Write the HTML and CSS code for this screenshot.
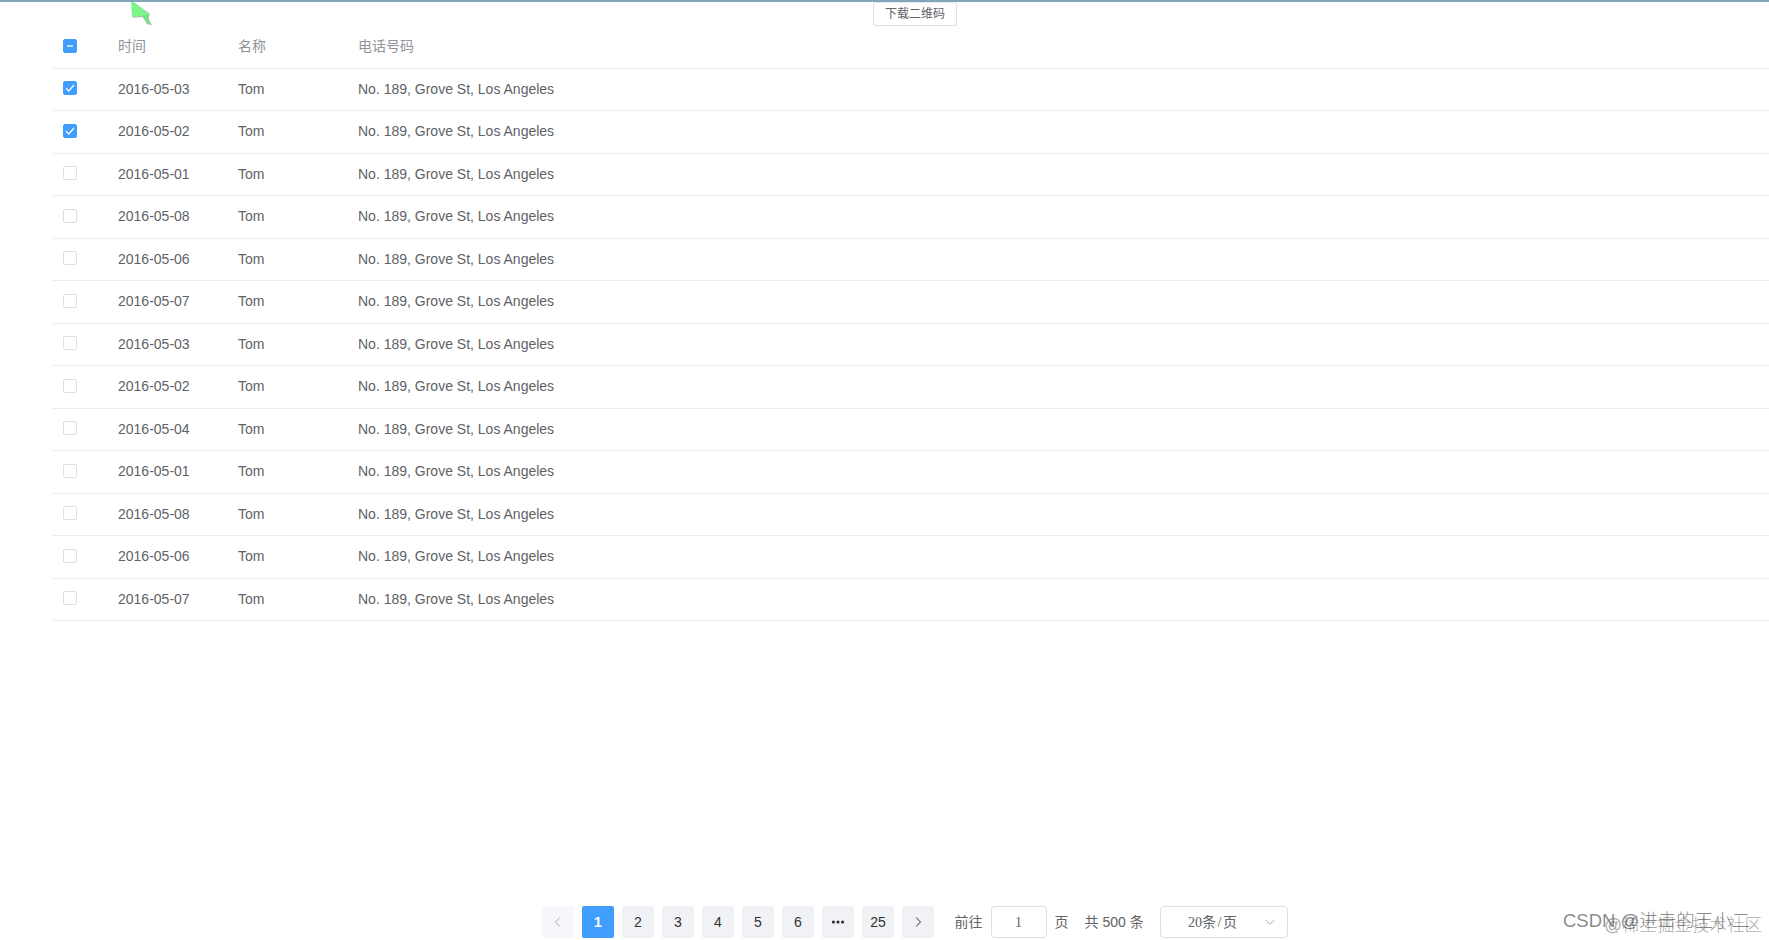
FILE: index.html
```html
<!DOCTYPE html>
<html lang="zh">
<head>
<meta charset="utf-8">
<title>二维码列表</title>
<link rel="stylesheet" href="styles.css">
</head>
<body>
<main class="page">
  <div class="toolbar"><button class="download">下载二维码</button></div>
  <section class="table" id="table">
    <div class="row head"><span class="box mixed"></span><span>时间</span><span>名称</span><span>电话号码</span></div>
  </section>
  <nav class="pagination">
    <div class="pager">
      <button class="page-btn disabled"><svg viewBox="0 0 12 12"><path d="M7.8 1.5 3.5 6l4.3 4.5"/></svg></button>
      <button class="page-btn active">1</button>
      <button class="page-btn">2</button>
      <button class="page-btn">3</button>
      <button class="page-btn">4</button>
      <button class="page-btn">5</button>
      <button class="page-btn">6</button>
      <button class="page-btn"><svg class="dots" viewBox="0 0 14 14"><circle cx="2.4" cy="7" r="1.6"/><circle cx="7" cy="7" r="1.6"/><circle cx="11.6" cy="7" r="1.6"/></svg></button>
      <button class="page-btn">25</button>
      <button class="page-btn"><svg viewBox="0 0 12 12"><path d="M4.2 1.5 8.5 6l-4.3 4.5"/></svg></button>
    </div>
    <span class="goto">前往</span>
    <span class="jump">1</span>
    <span class="unit">页</span>
    <span class="total">共 500 条</span>
    <div class="select"><span>20条<span class="slash">/</span>页</span><svg viewBox="0 0 12 12"><path d="M1.5 3.8 6 8.3l4.5-4.5"/></svg></div>
  </nav>
  <svg class="cursor" viewBox="0 0 26 28"><path class="shade" d="M2 1 19.8 13.8 18.6 18.5 22 25.6 17 24 12.5 17 3 17.8Z"/><path class="face" d="M1 0 19 14 12.5 16 2 17Z"/><path class="tail" d="M12.5 16 19 14 17.6 18.8 20.8 24.6 17 23Z"/></svg>
  <span class="mark mark-back">@稀土掘金技术社区</span>
  <span class="mark mark-front">CSDN @进击的王小二</span>
</main>
<script src="table.js"></script>
</body>
</html>
```
FILE: table.js
```js
const days = ['03', '02', '01', '08', '06', '07', '03', '02', '04', '01', '08', '06', '07'];
const tick = '<svg viewBox="0 0 14 14"><path d="M3 7.2 5.7 10 11 4"/></svg>';

document.getElementById('table').insertAdjacentHTML('beforeend', days.map((day, i) => `
  <div class="row">
    <span class="box${i < 2 ? ' checked' : ''}">${i < 2 ? tick : ''}</span>
    <span>2016-05-${day}</span><span>Tom</span><span>No. 189, Grove St, Los Angeles</span>
  </div>`).join(''));
```
FILE: styles.css
```css
* { box-sizing: border-box; }
body { margin: 0; background: #fff; color: #606266; font: 14px/23px "Liberation Sans", "Noto Sans CJK SC", sans-serif; }
button { padding: 0; font: inherit; }

.page { position: relative; display: flex; flex-direction: column; height: 940px; overflow: hidden; border-top: 2px solid #7fa6bd; }

.toolbar { display: flex; justify-content: center; height: 24px; padding-left: 61px; }
.download { width: 84px; height: 24px; border: 1px solid #dcdfe6; border-top-color: #e6e8ee; border-radius: 3px; background: #fff; color: #606266; font-size: 12px; line-height: 20px; }

.table { margin-left: 52px; }
.row { display: grid; grid-template-columns: 55px 120px 120px 1fr; align-items: center; height: 42.5px; padding-left: 11px; border-bottom: 1px solid #ebedf0; }
.row span { white-space: nowrap; }
.head { color: #909399; }
.row .box { display: block; width: 14px; height: 14px; margin-bottom: 2px; border: 1px solid #dcdfe6; border-radius: 2px; background: #fff; }
.box svg { display: block; width: 14px; height: 14px; margin: -1px; fill: none; stroke: #fff; stroke-width: 1.2; }
.row .checked, .row .mixed { border-color: #409eff; background: #409eff; }
.row .mixed { display: flex; align-items: center; justify-content: center; margin-bottom: 1px; }
.mixed::after { content: ""; width: 6px; height: 2px; background: #b9dbff; }

.pagination { display: flex; align-items: center; height: 32px; margin: auto 0 2px 542px; }
.pager { display: flex; gap: 8px; }
.page-btn { display: flex; align-items: center; justify-content: center; width: 32px; height: 32px; border: 0; border-radius: 2px; background: #f0f2f5; color: #303133; }
.page-btn svg, .select svg { width: 12px; height: 12px; fill: none; stroke: currentColor; stroke-width: 1; }
.page-btn .dots { width: 14px; height: 14px; fill: currentColor; stroke: none; }
.page-btn.active { background: #409eff; color: #fff; font-weight: 700; }
.page-btn.disabled { background: #f5f7fa; color: #a8abb2; }
.goto { width: 36px; margin-left: 20.5px; }
.jump { width: 56px; height: 32px; border: 1px solid #dcdfe6; border-radius: 4px; font-family: "Liberation Serif", serif; line-height: 31px; text-align: center; }
.unit { margin-left: 8px; }
.total { width: 75.5px; margin-left: 16px; white-space: nowrap; }
.select { display: flex; align-items: center; justify-content: space-between; width: 128px; height: 32px; padding: 0 11px 0 27px; border: 1px solid #dcdfe6; border-radius: 4px; font-family: "Liberation Serif", "Noto Sans CJK SC", serif; }
.select svg { color: #a8abb2; }
.slash { padding: 0 1.5px; }

.cursor { position: absolute; top: -2px; left: 130px; width: 26px; height: 28px; }
.shade { fill: #b3b6b3; }
.face { fill: #7cf68b; }
.tail { fill: #6ce980; }

.mark { position: absolute; white-space: nowrap; font-weight: 300; }
.mark-back { right: 7px; bottom: 3px; color: rgba(110, 110, 110, .6); font-size: 17.5px; line-height: 24px; }
.mark-front { left: 1563px; bottom: 7px; color: rgba(85, 85, 85, .7); font-size: 18.5px; line-height: 24px; }
```
